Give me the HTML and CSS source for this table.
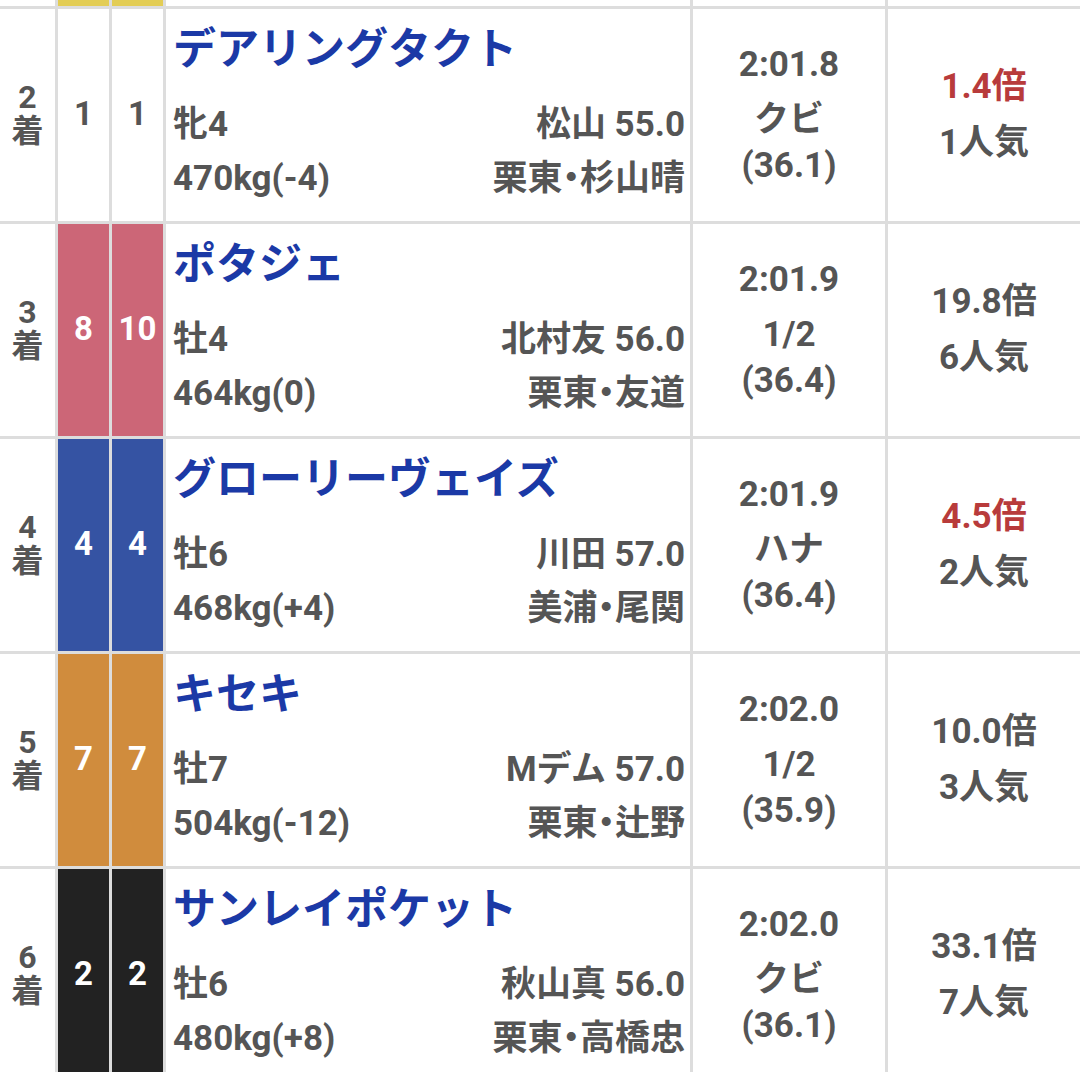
FILE: index.html
```html
<!DOCTYPE html>
<html lang="ja">
<head>
<meta charset="utf-8">
<title>レース結果</title>
<link rel="stylesheet" href="styles.css">
</head>
<body>
<div class="table">
  <div class="row row-partial">
    <div class="cell"></div>
    <div class="cell waku-yellow"></div>
    <div class="cell waku-yellow"></div>
    <div class="cell"></div>
    <div class="cell"></div>
    <div class="cell"></div>
  </div>

  <div class="row">
    <div class="cell rank"><div>2</div><div>着</div></div>
    <div class="cell num waku-white">1</div>
    <div class="cell num waku-white">1</div>
    <div class="cell horse">
      <div class="name">デアリングタクト</div>
      <div class="info"><span>牝4</span><span>松山 55.0</span></div>
      <div class="info"><span>470kg(-4)</span><span>栗東<span class="dot">・</span>杉山晴</span></div>
    </div>
    <div class="cell time"><div class="t">2:01.8</div><div>クビ</div><div>(36.1)</div></div>
    <div class="cell odds"><div class="o hot">1.4倍</div><div>1人気</div></div>
  </div>

  <div class="row">
    <div class="cell rank"><div>3</div><div>着</div></div>
    <div class="cell num waku-pink">8</div>
    <div class="cell num waku-pink">10</div>
    <div class="cell horse">
      <div class="name">ポタジェ</div>
      <div class="info"><span>牡4</span><span>北村友 56.0</span></div>
      <div class="info"><span>464kg(0)</span><span>栗東<span class="dot">・</span>友道</span></div>
    </div>
    <div class="cell time"><div class="t">2:01.9</div><div>1/2</div><div>(36.4)</div></div>
    <div class="cell odds"><div class="o">19.8倍</div><div>6人気</div></div>
  </div>

  <div class="row">
    <div class="cell rank"><div>4</div><div>着</div></div>
    <div class="cell num waku-blue">4</div>
    <div class="cell num waku-blue">4</div>
    <div class="cell horse">
      <div class="name">グローリーヴェイズ</div>
      <div class="info"><span>牡6</span><span>川田 57.0</span></div>
      <div class="info"><span>468kg(+4)</span><span>美浦<span class="dot">・</span>尾関</span></div>
    </div>
    <div class="cell time"><div class="t">2:01.9</div><div>ハナ</div><div>(36.4)</div></div>
    <div class="cell odds"><div class="o hot">4.5倍</div><div>2人気</div></div>
  </div>

  <div class="row">
    <div class="cell rank"><div>5</div><div>着</div></div>
    <div class="cell num waku-orange">7</div>
    <div class="cell num waku-orange">7</div>
    <div class="cell horse">
      <div class="name">キセキ</div>
      <div class="info"><span>牡7</span><span>Mデム 57.0</span></div>
      <div class="info"><span>504kg(-12)</span><span>栗東<span class="dot">・</span>辻野</span></div>
    </div>
    <div class="cell time"><div class="t">2:02.0</div><div>1/2</div><div>(35.9)</div></div>
    <div class="cell odds"><div class="o">10.0倍</div><div>3人気</div></div>
  </div>

  <div class="row">
    <div class="cell rank"><div>6</div><div>着</div></div>
    <div class="cell num waku-black">2</div>
    <div class="cell num waku-black">2</div>
    <div class="cell horse">
      <div class="name">サンレイポケット</div>
      <div class="info"><span>牡6</span><span>秋山真 56.0</span></div>
      <div class="info"><span>480kg(+8)</span><span>栗東<span class="dot">・</span>高橋忠</span></div>
    </div>
    <div class="cell time"><div class="t">2:02.0</div><div>クビ</div><div>(36.1)</div></div>
    <div class="cell odds"><div class="o">33.1倍</div><div>7人気</div></div>
  </div>
</div>
</body>
</html>
```

FILE: styles.css
```css
html, body {
  margin: 0;
  padding: 0;
  background: #ffffff;
}

body {
  width: 1080px;
  height: 1072px;
  overflow: hidden;
  font-family: "Roboto", "Noto Sans CJK JP", sans-serif;
  font-weight: 700;
  color: #555555;
}

.table {
  display: flex;
  flex-direction: column;
  gap: 3px;
  background: #dddddd;
}

.row {
  display: grid;
  grid-template-columns: 55px 51px 51px 524px 192px 192px;
  column-gap: 3px;
  height: 212px;
}

.row-partial {
  height: 6px;
}

.cell {
  background: #ffffff;
  min-width: 0;
}

.rank {
  display: flex;
  flex-direction: column;
  align-items: center;
  justify-content: center;
  text-align: center;
  font-size: 32px;
  line-height: 34px;
  padding-bottom: 2px;
}

.num {
  display: flex;
  align-items: center;
  justify-content: center;
  font-size: 33px;
  color: #ffffff;
  padding-bottom: 4px;
}

.waku-white { background: #ffffff; color: #555555; }
.waku-yellow { background: #e3cd55; }
.waku-pink { background: #cc6677; }
.waku-blue { background: #3553a3; }
.waku-orange { background: #d08c3d; }
.waku-black { background: #222222; }

.horse {
  padding: 13px 5px 0 7px;
}

.name {
  font-size: 43px;
  line-height: 54px;
  color: #1b39a6;
  white-space: nowrap;
  margin-bottom: 22px;
}

.info {
  display: flex;
  justify-content: space-between;
  font-size: 35px;
  line-height: 54px;
  white-space: nowrap;
}

.dot {
  font-feature-settings: "palt";
}

.time {
  display: flex;
  flex-direction: column;
  justify-content: center;
  align-items: center;
  font-size: 35px;
  line-height: 46px;
}

.time .t {
  margin-bottom: 9px;
}

.odds {
  display: flex;
  flex-direction: column;
  justify-content: center;
  align-items: center;
  font-size: 35px;
  line-height: 56px;
}

.hot {
  color: #b83b3b;
}
```
